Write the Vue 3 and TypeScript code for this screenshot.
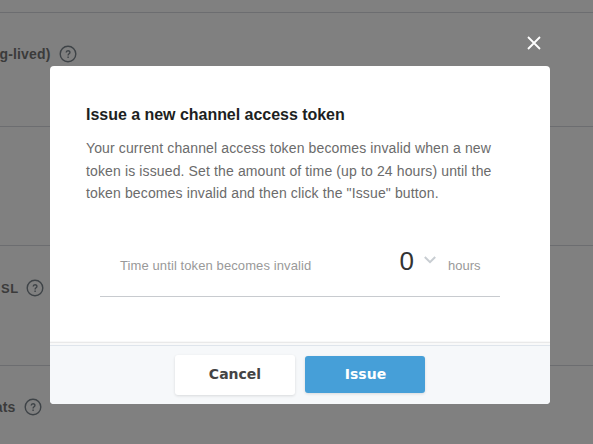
<script setup lang="ts">
import { ref } from 'vue'

interface Setting {
  label: string
  size: string
}

const settings: Setting[] = [
  { label: 'g-lived)', size: 'first' },
  { label: '', size: 'second' },
  { label: 'SL', size: 'third' },
  { label: 'ats', size: 'fourth' },
]
const hours = ref(0)
</script>

<template>
  <div class="screen">
    <main class="page">
      <section v-for="item in settings" :key="item.size" class="row" :class="item.size">
        <div v-if="item.label" class="name">
          <span>{{ item.label }}</span>
          <svg class="help" viewBox="0 0 18 18">
            <circle cx="9" cy="9" r="7.8" />
            <path d="M7.2 7.5C7.2 5.2 10.9 5.2 10.9 7.4C10.9 8.8 9.1 8.8 9.1 10.4M9.1 11.5V13" />
          </svg>
        </div>
      </section>
    </main>

    <div class="overlay">
      <div class="dialog" role="dialog">
        <button class="close" aria-label="Close">
          <svg viewBox="0 0 14 14"><path d="M1 1L13 13M13 1L1 13" /></svg>
        </button>
        <div class="body">
          <h2>Issue a new channel access token</h2>
          <p>
            Your current channel access token becomes invalid when a new<br />token is issued. Set the
            amount of time (up to 24 hours) until the<br />token becomes invalid and then click the
            "Issue" button.
          </p>
          <div class="field">
            <span class="caption">Time until token becomes invalid</span>
            <span class="value">{{ hours }}</span>
            <svg class="chevron" viewBox="0 0 12 8"><path d="M.8 1L6 6.2L11.2 1" /></svg>
            <span class="unit">hours</span>
          </div>
        </div>
        <footer>
          <button class="btn cancel">Cancel</button>
          <button class="btn issue">Issue</button>
        </footer>
      </div>
    </div>
  </div>
</template>

<style>
body {
  margin: 0;
  overflow: hidden;
}
</style>

<style scoped>
* {
  box-sizing: border-box;
}
.screen {
  position: relative;
  height: 444px;
  overflow: hidden;
  background: #808080;
  font-family: 'Liberation Sans', Arial, sans-serif;
}
.page {
  padding-top: 12px;
}
.row {
  border-top: 1px solid #6c6d70;
}
.first {
  height: 114px;
  padding-top: 32px;
}
.second {
  height: 119px;
}
.third {
  height: 120px;
  padding-top: 33px;
}
.fourth {
  height: 79px;
  padding-top: 32px;
}
.name {
  display: flex;
  justify-content: flex-end;
  align-items: center;
  gap: 8px;
  width: 76.5px;
  height: 18px;
  color: #3b3b3b;
  font-size: 14px;
  font-weight: bold;
  letter-spacing: 0.15px;
  white-space: nowrap;
}
.third .name {
  width: 43.5px;
  gap: 7px;
  font-size: 13px;
  letter-spacing: 0.4px;
}
.fourth .name {
  width: 41.5px;
}
.help {
  flex: none;
  width: 18px;
  height: 18px;
  fill: none;
  stroke: #3e4347;
  stroke-width: 1.4;
}
.overlay {
  position: absolute;
  inset: 0;
  padding: 66px 43px 40px 50px;
}
.dialog {
  position: relative;
  display: flex;
  flex-direction: column;
  width: 500px;
  height: 338px;
  border-radius: 4px;
  background: #fff;
}
.close {
  position: absolute;
  top: -30px;
  right: 9px;
  width: 14px;
  height: 14px;
  padding: 0;
  border: 0;
  background: none;
}
.close svg {
  display: block;
  fill: none;
  stroke: #fff;
  stroke-width: 1.8;
}
.body {
  flex: 1;
  padding: 39px 36px 0;
}
h2 {
  margin: 0;
  color: #1d1f22;
  font-size: 16px;
  letter-spacing: -0.03px;
  line-height: 20px;
}
p {
  margin: 12px 0 0;
  color: #6b6b6b;
  font-size: 14px;
  letter-spacing: 0.13px;
  line-height: 22.5px;
  white-space: nowrap;
}
.field {
  display: flex;
  align-items: baseline;
  height: 63px;
  margin: 29px 14px 0;
  padding: 12px 20px 0;
  border-bottom: 1px solid #c8cbcf;
  color: #999;
  font-size: 13px;
}
.caption {
  flex: 1;
  letter-spacing: 0.1px;
}
.value {
  color: #333;
  font-size: 26px;
  line-height: 30px;
}
.chevron {
  align-self: flex-start;
  width: 12px;
  height: 8px;
  margin: 10px 12px 0 10px;
  fill: none;
  stroke: #c8cdd2;
  stroke-width: 2;
}
.unit {
  margin-right: -0.5px;
}
footer {
  display: flex;
  justify-content: center;
  align-items: center;
  gap: 10px;
  height: 59px;
  border-top: 1px solid #dfe5ec;
  border-radius: 0 0 4px 4px;
  background: #f6f8fa;
  box-shadow: 0 -2px 0 #f9f9f9, 0 -3px 0 #e9e9e9, 0 -4px 0 #f8f8f8;
}
.btn {
  width: 120px;
  height: 37px;
  padding: 0;
  border: 0;
  border-radius: 3px;
  box-shadow: 0 1px 3px rgb(0 0 0 / 12%);
  font: bold 14px 'DejaVu Sans', sans-serif;
}
.cancel {
  height: 40px;
  padding-bottom: 2px;
  background: #fff;
  color: #444;
}
.issue {
  margin-bottom: 1px;
  padding: 0 0 2px 1px;
  background: #469fd8;
  color: #fff;
}
</style>
